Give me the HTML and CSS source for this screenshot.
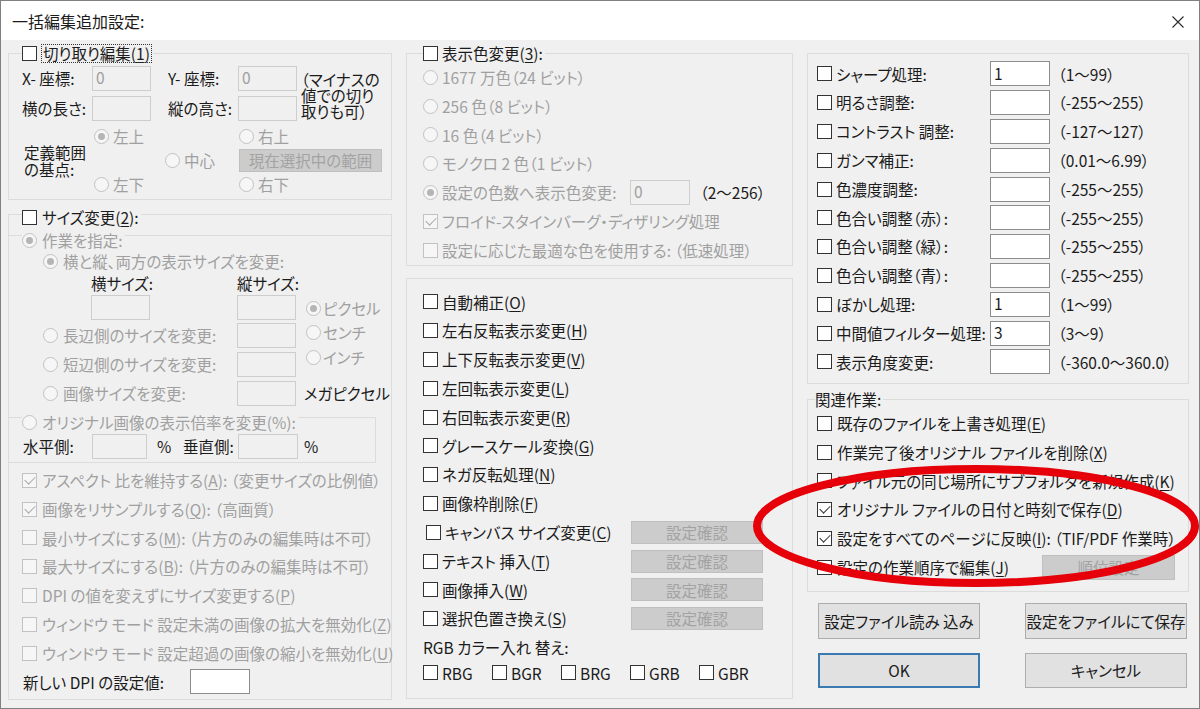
FILE: index.html
```html
<!DOCTYPE html>
<html lang="ja">
<head>
  <meta charset="UTF-8" />
  <title>一括編集追加設定</title>
  <link rel="stylesheet" href="styles.css">
</head>
<body>

<div class="window">
  <div class="titlebar">
    <span class="title">一括編集追加設定:</span>
    <svg class="close" width="12" height="12" viewBox="0 0 12 12"><path d="M0.5 0.5 L11.5 11.5 M11.5 0.5 L0.5 11.5" stroke="#2b2b2b" stroke-width="1.1" fill="none"/></svg>
  </div>

  <div class="dlg">

    <!-- 左列 -->
    <div class="col">
      <div class="group g-crop">
        <div class="legend"><span class="cb"></span><span class="focus">切り取り編集(<u>1</u>)</span></div>
        <div class="crop-grid">
          <span>X- 座標:</span>
          <span class="edit off">0</span>
          <span class="lbl-b">Y- 座標:</span>
          <span class="edit off">0</span>
          <span class="note">（マイナスの<br>値での切り<br>取りも可）</span>
          <span>横の長さ:</span>
          <span class="edit off"></span>
          <span class="lbl-b">縦の高さ:</span>
          <span class="edit off"></span>
          <span class="base">定義範囲<br>の基点:</span>
          <label class="opt off pt-tl"><span class="rd on"></span>左上</label>
          <label class="opt off pt-tr"><span class="rd"></span>右上</label>
          <label class="opt off pt-c"><span class="rd"></span>中心</label>
          <span class="btn off sel-btn">現在選択中の範囲</span>
          <label class="opt off pt-bl"><span class="rd"></span>左下</label>
          <label class="opt off pt-br"><span class="rd"></span>右下</label>
        </div>
      </div>

      <div class="group g-size">
        <div class="legend"><span class="cb"></span><span>サイズ変更(<u>2</u>):</span></div>

        <div class="sub-task">
          <div class="legend off"><span class="rd on"></span>作業を指定:</div>
          <label class="opt off both"><span class="rd on"></span>横と縦、両方の表示サイズを変更:</label>
          <div class="size-grid">
            <span class="hdr-w">横サイズ:</span>
            <span>縦サイズ:</span>
            <span></span>
            <span class="edit off w-in"></span>
            <span class="edit off"></span>
            <div class="units off">
              <label class="opt"><span class="rd on"></span>ピクセル</label>
              <label class="opt"><span class="rd"></span>センチ</label>
              <label class="opt"><span class="rd"></span>インチ</label>
            </div>
            <label class="opt off"><span class="rd"></span>長辺側のサイズを変更:</label>
            <span class="edit off"></span>
            <label class="opt off"><span class="rd"></span>短辺側のサイズを変更:</label>
            <span class="edit off"></span>
            <label class="opt off"><span class="rd"></span>画像サイズを変更:</label>
            <span class="edit off"></span>
            <span class="mp">メガピクセル</span>
          </div>
        </div>

        <div class="sub-ratio">
          <div class="legend off"><span class="rd"></span>オリジナル画像の表示倍率を変更(%):</div>
          <div class="ratio-row">
            <span>水平側:</span>
            <span class="edit off"></span>
            <span class="pct">%</span>
            <span class="lbl-v">垂直側:</span>
            <span class="edit off"></span>
            <span class="pct2">%</span>
          </div>
        </div>

        <div class="checks">
          <label class="row off"><span class="cb on"></span>アスペクト 比を維持する(<u>A</u>): （変更サイズの比例値）</label>
          <label class="row off"><span class="cb on"></span>画像をリサンプルする(<u>Q</u>): （高画質）</label>
          <label class="row off"><span class="cb"></span>最小サイズにする(<u>M</u>): （片方のみの編集時は不可）</label>
          <label class="row off"><span class="cb"></span>最大サイズにする(<u>B</u>): （片方のみの編集時は不可）</label>
          <label class="row off"><span class="cb"></span>DPI の値を変えずにサイズ変更する(<u>P</u>)</label>
          <label class="row off"><span class="cb"></span>ウィンドウ モード 設定未満の画像の拡大を無効化(<u>Z</u>)</label>
          <label class="row off"><span class="cb"></span>ウィンドウ モード 設定超過の画像の縮小を無効化(<u>U</u>)</label>
          <div class="row dpi"><span class="dpi-lbl">新しい DPI の設定値:</span><span class="edit w60"></span></div>
        </div>
      </div>
    </div>

    <!-- 中央列 -->
    <div class="col">
      <div class="group g-color">
        <div class="legend"><span class="cb"></span><span>表示色変更(<u>3</u>):</span></div>
        <div class="rows">
          <label class="row off"><span class="rd"></span>1677 万色（24 ビット）</label>
          <label class="row off"><span class="rd"></span>256 色（8 ビット）</label>
          <label class="row off"><span class="rd"></span>16 色（4 ビット）</label>
          <label class="row off"><span class="rd"></span>モノクロ 2 色（1 ビット）</label>
          <div class="row">
            <label class="opt off pick"><span class="rd on"></span>設定の色数へ表示色変更:</label>
            <span class="edit off w60">0</span>
            <span class="range">（2〜256）</span>
          </div>
          <label class="row off"><span class="cb on"></span>フロイド-スタインバーグ・ディザリング処理</label>
          <label class="row off"><span class="cb"></span>設定に応じた最適な色を使用する: （低速処理）</label>
        </div>
      </div>

      <div class="group g-ops">
        <label class="row"><span class="cb"></span>自動補正(<u>O</u>)</label>
        <label class="row"><span class="cb"></span>左右反転表示変更(<u>H</u>)</label>
        <label class="row"><span class="cb"></span>上下反転表示変更(<u>V</u>)</label>
        <label class="row"><span class="cb"></span>左回転表示変更(<u>L</u>)</label>
        <label class="row"><span class="cb"></span>右回転表示変更(<u>R</u>)</label>
        <label class="row"><span class="cb"></span>グレースケール変換(<u>G</u>)</label>
        <label class="row"><span class="cb"></span>ネガ反転処理(<u>N</u>)</label>
        <label class="row"><span class="cb"></span>画像枠削除(<u>F</u>)</label>
        <div class="row">
          <label class="opt wide canvas"><span class="cb"></span>キャンバス サイズ変更(<u>C</u>)</label>
          <span class="btn off btn-set">設定確認</span>
        </div>
        <div class="row">
          <label class="opt wide"><span class="cb"></span>テキスト 挿入(<u>T</u>)</label>
          <span class="btn off btn-set">設定確認</span>
        </div>
        <div class="row">
          <label class="opt wide"><span class="cb"></span>画像挿入(<u>W</u>)</label>
          <span class="btn off btn-set">設定確認</span>
        </div>
        <div class="row">
          <label class="opt wide"><span class="cb"></span>選択色置き換え(<u>S</u>)</label>
          <span class="btn off btn-set">設定確認</span>
        </div>
        <div class="row">RGB カラー入れ 替え:</div>
        <div class="swaps">
          <label class="opt"><span class="cb"></span>RBG</label>
          <label class="opt"><span class="cb"></span>BGR</label>
          <label class="opt"><span class="cb"></span>BRG</label>
          <label class="opt"><span class="cb"></span>GRB</label>
          <label class="opt"><span class="cb"></span>GBR</label>
        </div>
      </div>
    </div>

    <!-- 右列 -->
    <div class="col">
      <div class="group g-adj">
        <div class="adj-row"><label class="opt"><span class="cb"></span>シャープ処理:</label><span class="edit">1</span><span class="range">（1〜99）</span></div>
        <div class="adj-row"><label class="opt"><span class="cb"></span>明るさ調整:</label><span class="edit"></span><span class="range">（-255〜255）</span></div>
        <div class="adj-row"><label class="opt"><span class="cb"></span>コントラスト 調整:</label><span class="edit"></span><span class="range">（-127〜127）</span></div>
        <div class="adj-row"><label class="opt"><span class="cb"></span>ガンマ補正:</label><span class="edit"></span><span class="range">（0.01〜6.99）</span></div>
        <div class="adj-row"><label class="opt"><span class="cb"></span>色濃度調整:</label><span class="edit"></span><span class="range">（-255〜255）</span></div>
        <div class="adj-row"><label class="opt"><span class="cb"></span>色合い調整（赤）:</label><span class="edit"></span><span class="range">（-255〜255）</span></div>
        <div class="adj-row"><label class="opt"><span class="cb"></span>色合い調整（緑）:</label><span class="edit"></span><span class="range">（-255〜255）</span></div>
        <div class="adj-row"><label class="opt"><span class="cb"></span>色合い調整（青）:</label><span class="edit"></span><span class="range">（-255〜255）</span></div>
        <div class="adj-row"><label class="opt"><span class="cb"></span>ぼかし処理:</label><span class="edit">1</span><span class="range">（1〜99）</span></div>
        <div class="adj-row"><label class="opt"><span class="cb"></span>中間値フィルター処理:</label><span class="edit">3</span><span class="range">（3〜9）</span></div>
        <div class="adj-row"><label class="opt"><span class="cb"></span>表示角度変更:</label><span class="edit"></span><span class="range">（-360.0〜360.0）</span></div>
      </div>

      <div class="group g-rel">
        <div class="legend">関連作業:</div>
        <label class="row"><span class="cb"></span>既存のファイルを上書き処理(<u>E</u>)</label>
        <label class="row"><span class="cb"></span>作業完了後オリジナル ファイルを削除(<u>X</u>)</label>
        <label class="row"><span class="cb"></span>ファイル元の同じ場所にサブフォルダを新規作成(<u>K</u>)</label>
        <label class="row"><span class="cb on"></span>オリジナル ファイルの日付と時刻で保存(<u>D</u>)</label>
        <label class="row"><span class="cb on"></span>設定をすべてのページに反映(<u>I</u>): （TIF/PDF 作業時）</label>
        <div class="row">
          <label class="opt order"><span class="cb"></span>設定の作業順序で編集(<u>J</u>)</label>
          <span class="btn off btn-order">順位設定</span>
        </div>
      </div>

      <div class="actions">
        <span class="btn">設定ファイル読み 込み</span>
        <span class="btn">設定をファイルにて保存</span>
        <span class="btn default">OK</span>
        <span class="btn">キャンセル</span>
      </div>
    </div>

  </div>

  <!-- 赤丸の書き込み -->
  <svg class="mark" width="1200" height="709" viewBox="0 0 1200 709">
    <ellipse cx="976" cy="526" rx="219" ry="57" fill="none" stroke="#e5000a" stroke-width="8"/>
  </svg>
</div>

</body>
</html>
```

FILE: styles.css
```css
:root {
  --face: #f0f0f0;
  --line: #dcdcdc;
  --text: #1b1b1b;
  --dim: #a0a0a0;
}

* { box-sizing: border-box; margin: 0; padding: 0; }

body {
  background: #fff;
}

u { text-underline-offset: 2px; }

.window {
  position: relative;
  width: 1200px;
  height: 709px;
  border: 1px solid #808080;
  background: var(--face);
  color: var(--text);
  font-family: "Noto Sans CJK JP", "Noto Sans", sans-serif;
  font-size: 15.5px;
  line-height: 1.2;
  font-feature-settings: "palt";
  overflow: hidden;
}

.titlebar {
  height: 39px;
  background: #fff;
  display: flex;
  align-items: center;
  justify-content: space-between;
  padding: 3px 15px 0 11px;
}

.title { font-size: 16px; }

.close { display: block; }

.dlg {
  display: grid;
  grid-template-columns: 384px 387px 382px;
  column-gap: 14px;
  align-items: start;
  padding: 13px 0 0 7px;
}

.col {
  display: flex;
  flex-direction: column;
}

/* group box */
.group {
  border: 1px solid var(--line);
  display: flex;
  flex-direction: column;
}

.legend {
  align-self: flex-start;
  display: flex;
  align-items: center;
  height: 20px;
  margin-top: -11px;
  padding-right: 2px;
  background: var(--face);
  white-space: nowrap;
}

.off { color: var(--dim); }

/* checkbox / radio */
.cb, .rd {
  flex: none;
  position: relative;
  width: 15px;
  height: 15px;
  margin-right: 5px;
  border: 1px solid #333;
  background: #fff;
}

.rd { border-radius: 50%; }

.cb.on::after {
  content: "";
  position: absolute;
  left: 4px;
  top: 0;
  width: 5px;
  height: 9px;
  border: solid #333;
  border-width: 0 1.5px 1.5px 0;
  transform: rotate(45deg);
}

.rd.on::after {
  content: "";
  position: absolute;
  inset: 3px;
  border-radius: 50%;
  background: #333;
}

.off .cb, .off.opt .cb, .off .rd, .off.opt .rd, .legend.off .rd {
  border-color: #c2c2c2;
  background: #f6f6f6;
}

.off .cb.on::after { border-color: #a9a9a9; }
.off .rd.on::after { background: #b5b5b5; }

.row {
  height: 28.8px;
  display: flex;
  align-items: center;
  white-space: nowrap;
}

.opt {
  display: flex;
  align-items: center;
  white-space: nowrap;
}

/* edit box */
.edit {
  display: flex;
  align-items: center;
  height: 25px;
  padding: 0 3px 2px;
  border: 1px solid #8c8c8c;
  background: #fff;
  color: var(--text);
}

.edit.off {
  border-color: #cdcdcd;
  background: var(--face);
  color: var(--dim);
}

.w60 { width: 60px; }

/* button */
.btn {
  display: flex;
  align-items: center;
  justify-content: center;
  border: 1px solid #adadad;
  background: #e1e1e1;
  white-space: nowrap;
}

.btn.off {
  border-color: #bfbfbf;
  background: #cccccc;
  color: #a3a3a3;
}

.btn.default { border: 2px solid #3a7ab0; }

/* 切り取り編集 */
.g-crop .legend { margin-left: 13px; }

.focus {
  outline: 1px dotted #333;
  padding: 0 1px;
  line-height: 17px;
}

.crop-grid {
  display: grid;
  grid-template-columns: 70px 59px 87px 59px 1fr;
  grid-template-rows: 30px 30px 26px 23px 25px;
  align-items: center;
  padding: 0 0 2px 13px;
  white-space: nowrap;
}

.crop-grid .lbl-b { padding-left: 17px; }

.note {
  grid-column: 5;
  grid-row: 1 / span 2;
  margin-top: 3px;
  padding-left: 4px;
  line-height: 16px;
}

.base {
  grid-column: 1;
  grid-row: 3 / span 3;
  padding: 2px 0 0 2px;
  line-height: 17px;
}

.crop-grid .rd { margin-right: 4px; }

.pt-tl { grid-area: 3 / 2; padding-left: 2px; }
.pt-tr { grid-area: 3 / 4; padding-left: 1px; }
.pt-c  { grid-area: 4 / 3; padding-left: 14px; }
.pt-bl { grid-area: 5 / 2; padding-left: 2px; }
.pt-br { grid-area: 5 / 4; padding-left: 1px; }

.sel-btn {
  grid-area: 4 / 4 / 5 / 6;
  width: 143px;
  height: 23px;
  margin-left: 1px;
}

/* サイズ変更 */
.g-size { margin-top: 14px; }

.g-size > .legend {
  margin-top: -8px;
  margin-left: 13px;
}

.sub-task {
  display: flex;
  flex-direction: column;
  margin-top: 8px;
  border-top: 1px solid var(--line);
}

.sub-task > .legend,
.sub-ratio > .legend {
  margin-top: -6px;
  margin-left: 13px;
}

.both {
  height: 22px;
  padding-left: 34px;
}

.size-grid {
  display: grid;
  grid-template-columns: 194px 59px 1fr;
  grid-template-rows: 22px 27px 29px 29px 28px;
  align-items: center;
  padding-left: 34px;
  white-space: nowrap;
}

.size-grid .hdr-w,
.size-grid .w-in { margin-left: 48px; }

.w-in { width: 59px; }

.units {
  grid-column: 3;
  grid-row: 2 / span 3;
  align-self: start;
  display: flex;
  flex-direction: column;
  padding: 2px 0 0 10px;
}

.units .opt { height: 24.5px; }
.units .rd { margin-right: 2px; }

.mp { padding-left: 8px; }

.sub-ratio {
  display: flex;
  flex-direction: column;
  margin: 10px 15px 0 0;
  padding-bottom: 2px;
  border: 1px solid var(--line);
  border-left: 0;
}

.ratio-row {
  display: grid;
  grid-template-columns: 69px 55px 26px 65px 60px auto;
  align-items: center;
  height: 28px;
  padding-left: 14px;
}

.ratio-row .pct { padding-left: 10px; }
.ratio-row .lbl-v { padding-left: 10px; }
.ratio-row .pct2 { padding-left: 6px; }

.checks {
  display: flex;
  flex-direction: column;
  margin-top: 3px;
  padding: 0 0 2.6px 13px;
}

.dpi-lbl {
  width: 168px;
  padding-left: 1px;
}

/* 表示色変更 */
.g-color .legend { margin-left: 16px; }

.g-color .rows {
  display: flex;
  flex-direction: column;
  padding: 0 0 0.4px 16px;
}

.g-color .rd, .g-color .cb { margin-right: 4px; }

.pick { width: 207px; }

.range { margin-left: 10px; }

/* 画像処理 */
.g-ops {
  margin-top: 12px;
  padding: 8.6px 0 14px 16px;
}

.g-ops .cb { margin-right: 4px; }

.wide { width: 208px; }

.canvas { padding-left: 3px; }

.btn-set {
  width: 132px;
  height: 23px;
}

.swaps {
  display: grid;
  grid-template-columns: repeat(5, 69px);
  align-items: center;
  height: 22px;
}

/* 右列 */
.g-adj { padding: 5.6px 0 6.6px 9px; }

.adj-row {
  display: grid;
  grid-template-columns: 173px 60px auto;
  align-items: center;
  height: 28.8px;
  white-space: nowrap;
}

.adj-row .cb { margin-right: 4px; }

.adj-row .range { margin-left: 0; padding-left: 8px; }

.g-rel {
  margin-top: 15px;
  padding: 0 0 9.2px 9px;
}

.g-rel .legend { margin-left: -2px; }

.order { width: 225px; }

.btn-order {
  width: 133px;
  height: 25px;
}

.actions {
  display: grid;
  grid-template-columns: 162px 162px;
  grid-template-rows: 36px 35px;
  column-gap: 45px;
  row-gap: 14px;
  margin: 11px 0 0 11px;
}

/* 赤丸 */
.mark {
  position: absolute;
  left: -1px;
  top: -1px;
  pointer-events: none;
}
```
